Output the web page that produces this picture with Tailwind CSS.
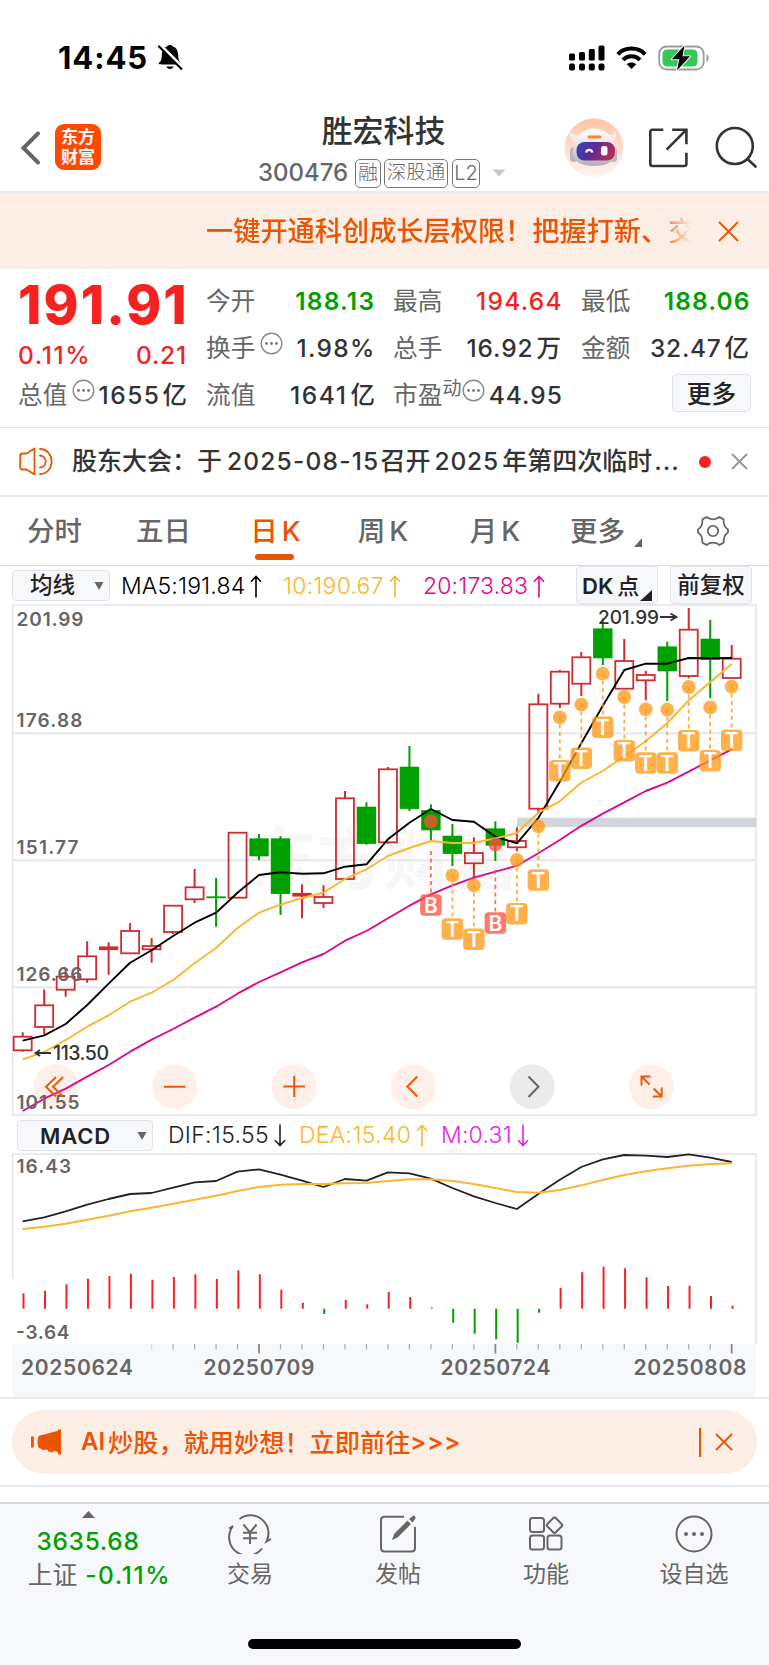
<!DOCTYPE html>
<html lang="zh-CN">
<head>
<meta charset="utf-8">
<title>胜宏科技 300476</title>
<script src="https://cdn.jsdelivr.net/npm/@tailwindcss/browser@4"></script>
</head>
<body class="w-[769px] h-[1665px] overflow-hidden bg-white text-[#333] font-[Inter,'Noto_Sans_CJK_SC',sans-serif] leading-none whitespace-nowrap">

<!-- status bar -->
<div class="h-[116px] flex items-center justify-between pl-[58px] pr-[59px]">
  <div class="flex items-center">
    <span class="text-[31px] font-bold text-black tracking-[0.900px] mt-[-1px]">14:45</span>
    <svg class="ml-[9px]" width="27" height="28" viewBox="0 0 27 28"><path d="M4.500 20.500 H23 C24 20.500 24.200 19.500 23.400 18.600 C21.600 16.800 21.300 15 21.200 11 C21 6.500 19 3.500 16 2.600 C15 0.600 11 0.600 10 2.600 C7 3.500 5 6.500 4.800 11 C4.700 15 4.400 16.800 2.200 18.600 C1.200 19.500 1.500 20.500 4.500 20.500Z M9.500 22.500 H16.500 C16 25.700 10 25.700 9.500 22.500Z" fill="#000"/><path d="M2.500 0.500 L27 25" stroke="#fff" stroke-width="3.600"/><path d="M1.300 1.800 L25 25.500" stroke="#000" stroke-width="2"/></svg>
  </div>
  <div class="flex items-center mt-[-1px]">
    <svg width="36" height="26" viewBox="0 0 36 26"><g fill="#000"><rect x="0" y="8.500" width="6" height="7" rx="1.500"/><rect x="10" y="7" width="6" height="8.500" rx="1.500"/><rect x="19.800" y="4" width="6" height="11.500" rx="1.500"/><rect x="29.500" y="0.500" width="6" height="15" rx="1.500"/><rect x="0" y="18.500" width="6" height="7" rx="2"/><rect x="10" y="18.500" width="6" height="7" rx="2"/><rect x="19.800" y="18.500" width="6" height="7" rx="2"/><rect x="29.500" y="18.500" width="6" height="7" rx="2"/></g></svg>
    <svg class="ml-[11px]" width="31" height="24" viewBox="0 0 31 24"><g fill="none" stroke="#000" stroke-width="4"><path d="M1.800 8.300 C9 0.700 22 0.700 29.200 8.300"/><path d="M7 13.800 C11.500 9 19.500 9 24 13.800"/></g><path d="M15.500 23 L10.800 18.300 C13.200 15.900 17.800 15.900 20.200 18.300Z" fill="#000"/></svg>
    <svg class="ml-[11px]" width="52" height="26" viewBox="0 0 52 26"><rect x="1.200" y="1.500" width="44.500" height="23" rx="7.500" fill="none" stroke="#9b9b9b" stroke-width="1.800"/><rect x="4.500" y="4.500" width="35" height="17" rx="4.500" fill="#34c759"/><path d="M48.500 9 C51.500 10.500 51.500 15.500 48.500 17Z" fill="#9b9b9b"/><path d="M26.500 0.500 L13.800 14.300 H21.300 L19 25.500 L32 11.300 H24.500Z" fill="#000" stroke="#fff" stroke-width="1.800" paint-order="stroke" stroke-linejoin="round"/></svg>
  </div>
</div>

<!-- title bar -->
<div class="h-[77px] flex border-b-2 border-[#ebebee]">
  <svg class="ml-[20px] mt-[14px] shrink-0" width="22" height="36" viewBox="0 0 22 36"><path d="M18 3.500 L3.500 18 L18 32.500" fill="none" stroke="#666" stroke-width="4" stroke-linecap="round"/></svg>
  <div class="ml-[13px] mt-[8px] size-[46px] rounded-[9px] bg-[#ff4800] text-white font-bold text-[17px] leading-[20px] pt-[3px] text-center shrink-0"><div>东方</div><div>财富</div></div>
  <div class="w-[280px] ml-[142px] flex flex-col items-center shrink-0">
    <div class="text-[30.900px] leading-[32px] font-medium ml-[1px] mt-[-1px]">胜宏科技</div>
    <div class="flex items-center mt-[11px] h-[30px] self-stretch pl-[15px] text-[#666]">
      <span class="text-[24px] font-medium w-[97px]">300476</span>
      <span class="h-[29px] w-[26px] border border-[#777] rounded-[5px] text-[20px] font-light flex items-center justify-center">融</span>
      <span class="ml-[3px] h-[29px] w-[64px] border border-[#777] rounded-[5px] text-[19.500px] font-light flex items-center justify-center">深股通</span>
      <span class="ml-[4px] h-[29px] w-[28px] border border-[#777] rounded-[5px] text-[20px] font-light flex items-center justify-center">L2</span>
      <svg class="ml-[12px]" width="14" height="8" viewBox="0 0 14 8"><path d="M0.500 0.500 H13.500 L7 7.500Z" fill="#c9c9c9"/></svg>
    </div>
  </div>
  <svg class="ml-[41px] mt-[2px] shrink-0" width="60" height="60" viewBox="0 0 60 60">
    <defs><linearGradient id="halo" x1="0" y1="0" x2="0" y2="1"><stop offset="0" stop-color="#ffc4a6"/><stop offset="1" stop-color="#fff5f0"/></linearGradient><linearGradient id="visor" x1="0" y1="0" x2="1" y2="0.300"><stop offset="0" stop-color="#3348b8"/><stop offset="0.500" stop-color="#5a2a9c"/><stop offset="1" stop-color="#b52a5c"/></linearGradient><linearGradient id="helmet" x1="0" y1="0" x2="0" y2="1"><stop offset="0" stop-color="#fff"/><stop offset="0.450" stop-color="#e6e2e6"/><stop offset="1" stop-color="#b3b0ba"/></linearGradient></defs>
    <circle cx="30" cy="29.700" r="29.300" fill="url(#halo)"/>
    <path d="M11 24 C5 21 5 15 6.500 13 C8 17 11 18 15 17Z M47 24 C53 21 53 15 51.500 13 C50 17 47 18 43 17Z" fill="#f4ecec"/>
    <rect x="6" y="29" width="8" height="15" rx="4" fill="#b9b5bc"/><rect x="46" y="29" width="7" height="15" rx="3.500" fill="#b9b5bc"/>
    <path d="M30 10.500 C41 10.500 50 18 51.500 33 C51.500 44 42 48 30 48 C18 48 8.500 44 9 33 C10 18 19 10.500 30 10.500Z" fill="url(#helmet)"/>
    <rect x="23.500" y="17.500" width="14" height="3" rx="1.500" fill="#f08a35"/>
    <rect x="12.500" y="24" width="38.500" height="18.500" rx="8" fill="url(#visor)"/>
    <path d="M22 34.500 C23 31 27.500 31 28.500 34.500" fill="none" stroke="#fff" stroke-width="2.200"/><rect x="37" y="28" width="6.500" height="9.500" rx="2.500" fill="#fff"/>
  </svg>
  <svg class="ml-[24px] mt-[11px] shrink-0" width="42" height="42" viewBox="0 0 42 42"><g fill="none" stroke="#333" stroke-width="2.600" stroke-linecap="square"><path d="M14 2.800 H4.500 Q2.300 2.800 2.300 5 V36.800 Q2.300 39 4.500 39 H36.200 Q38.400 39 38.400 36.800 V27"/><path d="M25.500 2.800 H38.400 V16 M37.500 3.700 L19.500 21.700"/></g></svg>
  <svg class="ml-[25px] mt-[10px] shrink-0" width="44" height="44" viewBox="0 0 44 44"><g fill="none" stroke="#333" stroke-width="2.600" stroke-linecap="round"><circle cx="19.800" cy="20" r="18"/><path d="M32.500 33 L40.500 40.500"/></g></svg>
</div>

<!-- promo banner -->
<div class="h-[76px] bg-[#fdeee5] flex items-center text-[#ea5504]">
  <div class="ml-[206px] w-[486px] text-[27.200px] leading-[40px] font-medium font-['Noto_Sans_CJK_SC',sans-serif] mt-[-5px] [mask-image:linear-gradient(to_right,black_450px,transparent_485px)]">一键开通科创成长层权限！把握打新、交</div>
  <svg class="ml-[26px]" width="21" height="21" viewBox="0 0 21 21"><path d="M1 1 L20 20 M20 1 L1 20" stroke="#ea5504" stroke-width="1.800"/></svg>
</div>

<!-- quote -->
<div class="h-[159px] border-b-[1.500px] border-[#e4e4e6] flex pl-[18px] text-[24.700px] text-[#666]">
  <div class="w-[169px] flex flex-col">
    <div class="h-[61px] pt-[10px] text-[53px] font-extrabold text-[#f62222] tracking-[2.100px] leading-[53px]">191.91</div>
    <div class="h-[46px] pt-[4px] flex items-center justify-between text-[24.500px] font-medium text-[#f62222]"><span class="tracking-[1.600px]">0.11%</span><span class="tracking-[0.800px]">0.21</span></div>
    <div class="h-[34px] mt-[2px] flex items-center justify-between">
      <span class="flex items-center">总值<svg class="ml-[5px] mt-[-9px]" width="23" height="23" viewBox="0 0 23 23"><circle cx="11.500" cy="11.500" r="10.300" fill="none" stroke="#8a8a8a" stroke-width="1.400"/><g fill="#777"><circle cx="6.500" cy="11.500" r="1.400"/><circle cx="11.500" cy="11.500" r="1.400"/><circle cx="16.500" cy="11.500" r="1.400"/></g></svg></span>
      <span class="text-[#333] font-medium text-[24.500px] tracking-[1.500px]">1655<span class="ml-[2px] tracking-normal">亿</span></span>
    </div>
  </div>
  <div class="ml-[19px] w-[168px] flex flex-col pt-[9px]">
    <div class="h-[47px] flex items-center justify-between">今开<span class="text-[#00a000] font-semibold text-[24.500px] tracking-[1.200px] mr-[-1.200px]">188.13</span></div>
    <div class="h-[47px] flex items-center justify-between"><span class="flex items-center">换手<svg class="ml-[5px] mt-[-9px]" width="23" height="23" viewBox="0 0 23 23"><circle cx="11.500" cy="11.500" r="10.300" fill="none" stroke="#8a8a8a" stroke-width="1.400"/><g fill="#777"><circle cx="6.500" cy="11.500" r="1.400"/><circle cx="11.500" cy="11.500" r="1.400"/><circle cx="16.500" cy="11.500" r="1.400"/></g></svg></span><span class="text-[#333] font-medium text-[24.500px] tracking-[1.300px] mr-[-1.600px]">1.98%</span></div>
    <div class="h-[47px] flex items-center justify-between">流值<span class="text-[#333] font-medium text-[24.500px] tracking-[1.600px] mr-[-1px]">1641<span class="ml-[3px] tracking-normal">亿</span></span></div>
  </div>
  <div class="ml-[19px] w-[168px] flex flex-col pt-[9px]">
    <div class="h-[47px] flex items-center justify-between">最高<span class="text-[#f62222] font-medium text-[24.500px] tracking-[1.300px] mr-[-1.900px]">194.64</span></div>
    <div class="h-[47px] flex items-center justify-between">总手<span class="text-[#333] font-medium text-[24.500px] tracking-[0.900px]">16.92<span class="ml-[3px] tracking-normal">万</span></span></div>
    <div class="h-[47px] flex items-center justify-between"><span class="flex items-center">市盈<span class="text-[19px] mt-[-14px]">动</span><svg class="ml-[1px] mt-[-9px]" width="23" height="23" viewBox="0 0 23 23"><circle cx="11.500" cy="11.500" r="10.300" fill="none" stroke="#8a8a8a" stroke-width="1.400"/><g fill="#777"><circle cx="6.500" cy="11.500" r="1.400"/><circle cx="11.500" cy="11.500" r="1.400"/><circle cx="16.500" cy="11.500" r="1.400"/></g></svg></span><span class="text-[#333] font-medium text-[24.500px] tracking-[1px] mr-[-1.900px]">44.95</span></div>
  </div>
  <div class="ml-[20px] w-[168px] flex flex-col pt-[9px]">
    <div class="h-[47px] flex items-center justify-between">最低<span class="text-[#00a000] font-semibold text-[24.500px] tracking-[1.100px] mr-[-1.600px]">188.06</span></div>
    <div class="h-[47px] flex items-center justify-between">金额<span class="text-[#333] font-medium text-[24.500px] tracking-[0.700px]">32.47<span class="ml-[3px] tracking-normal">亿</span></span></div>
    <div class="h-[38px] w-[79px] mt-[2px] self-end mr-[-2px] rounded-[4px] border-[1.500px] border-[#e1e3e9] bg-[#f7f8fb] flex items-center justify-center text-[#222] font-medium pt-[2px]">更多</div>
  </div>
</div>

<!-- notice -->
<div class="h-[69px] border-b-2 border-[#ebebee] flex items-center">
  <svg class="ml-[19px]" width="34" height="29" viewBox="0 0 34 29"><g fill="none" stroke="#ea5504" stroke-width="1.800" stroke-linecap="round" stroke-linejoin="round"><path d="M15.500 1.500 L7.500 6.500 H3.500 Q1.200 6.500 1.200 9 V20 Q1.200 22.500 3.500 22.500 H7.500 L15.500 27.500Z"/><path d="M21 8.500 C28.500 9 28.500 20 21 20.500 M21 2 C36.500 2.500 36.500 26.500 21 27"/></g></svg>
  <div class="ml-[19px] w-[606px] flex items-center font-medium text-[25px]"><span>股东大会：于</span><span class="ml-[5px] text-[24.500px] tracking-[1.200px]">2025-08-15</span><span class="ml-[1px]">召开</span><span class="ml-[4px] text-[24.500px] tracking-[0.900px]">2025</span><span class="ml-[3px]">年第四次临时</span><span class="ml-[2px] tracking-[1px]">...</span></div>
  <span class="ml-[21px] size-[12px] rounded-full bg-[#f62222]"></span>
  <svg class="ml-[20px]" width="17" height="17" viewBox="0 0 17 17"><path d="M1 1 L16 16 M16 1 L1 16" stroke="#999" stroke-width="2"/></svg>
</div>

<!-- period tabs -->
<div class="h-[69px] border-b-[1.500px] border-[#d9dbe2] flex text-[27.500px] text-[#666] font-medium">
  <div class="w-[109px] h-[69px] flex items-center justify-center">分时</div>
  <div class="w-[109px] h-[69px] flex items-center justify-center">五日</div>
  <div class="w-[115px] h-[69px] flex items-center justify-center relative text-[#ea5504]">日<span class="ml-[4px]">K</span><i class="absolute left-[37px] top-[57px] w-[39px] h-[6px] rounded-full bg-[#ea5504]"></i></div>
  <div class="w-[100px] h-[69px] flex items-center justify-center">周<span class="ml-[4px]">K</span></div>
  <div class="w-[124px] h-[69px] flex items-center justify-center">月<span class="ml-[4px]">K</span></div>
  <div class="ml-[13px] h-[69px] flex items-center">更多<svg class="ml-[9px] mt-[21px]" width="8" height="9" viewBox="0 0 8 9"><path d="M8 0 V9 H0Z" fill="#666"/></svg></div>
  <svg class="ml-[55px] mt-[18px]" width="32" height="32" viewBox="0 0 32 32"><g fill="none" stroke="#666" stroke-width="1.800" stroke-linejoin="round"><path d="M9.500 2 Q12.500 4.300 16 4.300 Q19.500 4.300 22.500 2 L26.600 4.400 Q26.300 11.800 31 14.600 V17.400 Q26.300 20.200 26.600 27.600 L22.500 30 Q19.500 27.700 16 27.700 Q12.500 27.700 9.500 30 L5.400 27.600 Q5.700 20.200 1 17.400 V14.600 Q5.700 11.800 5.400 4.400Z"/><circle cx="16" cy="16" r="5.200"/></g></svg>
</div>

<!-- moving averages -->
<div class="h-[37px] flex items-center text-[23px] font-light pl-[12px]">
  <div class="w-[98px] h-[31px] rounded-[4px] border-[1.500px] border-[#e1e3e9] bg-[#f7f8fb] flex items-center pl-[17px] mt-[2px] font-medium text-[22.500px] text-[#222]">均线<svg class="ml-[19px]" width="10" height="8" viewBox="0 0 10 8"><path d="M0.500 0 H9.500 L5 8Z" fill="#666"/></svg></div>
  <div class="ml-[11px] w-[161px] flex items-center text-black mt-[3px]"><span class="tracking-[0.150px]">MA5:191.84</span><svg class="ml-[5px]" width="12" height="23" viewBox="0 0 12 23"><path d="M6 22.500 V1.500 M1 6.800 L6 1.500 L11 6.800" fill="none" stroke="currentColor" stroke-width="1.600"/></svg></div>
  <div class="ml-[1px] w-[140px] flex items-center text-[#fdb52f] mt-[3px]"><span class="tracking-[0.200px]">10:190.67</span><svg class="ml-[5px]" width="12" height="23" viewBox="0 0 12 23"><path d="M6 22.500 V1.500 M1 6.800 L6 1.500 L11 6.800" fill="none" stroke="currentColor" stroke-width="1.600"/></svg></div>
  <div class="w-[153px] flex items-center text-[#e2068c] mt-[3px]"><span class="tracking-[0.150px]">20:173.83</span><svg class="ml-[5px]" width="12" height="23" viewBox="0 0 12 23"><path d="M6 22.500 V1.500 M1 6.800 L6 1.500 L11 6.800" fill="none" stroke="currentColor" stroke-width="1.600"/></svg></div>
  <div class="w-[82px] h-[38px] mt-[1px] rounded-[4px] border-[1.500px] border-[#e1e3e9] bg-[#f7f8fb] flex items-center pl-[5px] pt-[2px] font-medium text-[22px] text-[#222]"><span class="font-semibold">DK</span><span class="ml-[4px]">点</span><svg class="ml-[1px] mt-[18px]" width="12" height="11" viewBox="0 0 12 11"><path d="M12 0 V11 H0Z" fill="#222"/></svg></div>
  <div class="ml-[12px] w-[82px] h-[38px] mt-[1px] rounded-[4px] border-[1.500px] border-[#e1e3e9] bg-[#f7f8fb] flex items-center justify-center pt-[1px] font-medium text-[22.500px] text-[#222]">前复权</div>
</div>

<!-- candlestick chart, then MACD header and chart; x/y units are page pixels -->
<svg id="kline" class="block" width="769" height="513" viewBox="0 603 769 513"></svg>
<div class="h-[37px] flex items-center pl-[17px] text-[23px] font-light">
  <div class="w-[136px] h-[31px] mt-[2px] rounded-[4px] border-[1.500px] border-[#e1e3e9] bg-[#f7f8fb] flex items-center pl-[22px] font-semibold text-[22px] tracking-[0.900px] text-[#222]">MACD<svg class="ml-[26px]" width="10" height="8" viewBox="0 0 10 8"><path d="M0.500 0 H9.500 L5 8Z" fill="#666"/></svg></div>
  <div class="ml-[15px] mt-[2px] w-[131px] flex items-center text-[#222] tracking-[0.300px]">DIF:15.55<svg class="ml-[5px]" width="12" height="23" viewBox="0 0 12 23"><path d="M6 0.500 V21.500 M1 16.200 L6 21.500 L11 16.200" fill="none" stroke="currentColor" stroke-width="1.600"/></svg></div>
  <div class="w-[142px] mt-[2px] flex items-center text-[#fdb52f] tracking-[0.300px]">DEA:15.40<svg class="ml-[5px]" width="12" height="23" viewBox="0 0 12 23"><path d="M6 22.500 V1.500 M1 6.800 L6 1.500 L11 6.800" fill="none" stroke="currentColor" stroke-width="1.600"/></svg></div>
  <div class="flex items-center mt-[2px] text-[#e61ff0] tracking-[0.200px]">M:0.31<svg class="ml-[5px]" width="12" height="23" viewBox="0 0 12 23"><path d="M6 0.500 V21.500 M1 16.200 L6 21.500 L11 16.200" fill="none" stroke="currentColor" stroke-width="1.600"/></svg></div>
</div>
<svg id="macd" class="block" width="769" height="244" viewBox="0 1153 769 244"></svg>

<!-- AI promo -->
<div class="h-[90px] border-y-2 border-[#ebebee] flex items-center pl-[12px]">
  <div class="w-[745px] h-[64px] rounded-full bg-[#fdeee5] flex items-center text-[#ea5504]">
    <svg class="ml-[19px] mt-[-1px]" width="31" height="26" viewBox="0 0 31 26"><g fill="#ea5504"><rect x="0" y="7.500" width="2.800" height="11"/><path d="M7.500 7 L27 1.800 V0.500 H30 V25.500 H27 V23 L23 22 L21 23.500 L17.500 22.500 L16 20.500 L12 21 L7.500 18.500 Q5.500 13 7.500 7Z"/></g></svg>
    <div class="ml-[19px] w-[600px] flex items-center font-medium text-[25.200px]"><span class="text-[24px] font-semibold">AI</span><span class="ml-[3px] font-['Noto_Sans_CJK_SC',sans-serif]">炒股，就用妙想！立即前往</span><span class="text-[24px] tracking-[0.800px] font-semibold">&gt;&gt;&gt;</span></div>
    <i class="ml-[18px] w-[1.500px] h-[29px] bg-[#ea5504]"></i>
    <svg class="ml-[14px]" width="18" height="18" viewBox="0 0 18 18"><path d="M1 1 L17 17 M17 1 L1 17" stroke="#ea5504" stroke-width="1.800"/></svg>
  </div>
</div>

<!-- bottom bar -->
<div class="mt-[15px] h-[163px] border-t-2 border-[#d9dadd] bg-[#f7f8fb] flex text-[23px] text-[#666] relative">
  <div class="w-[176px] flex flex-col items-center">
    <svg class="mt-[7px]" width="13" height="7" viewBox="0 0 13 7"><path d="M0 7 H13 L6.500 0Z" fill="#666"/></svg>
    <span class="mt-[9px] text-[24.500px] leading-[28px] font-medium text-[#00a000] tracking-[0.700px]">3635.68</span>
    <span class="mt-[2px] flex items-center text-[24.700px] leading-[36px] ml-[23px]">上证<span class="ml-[8px] text-[24.500px] font-medium text-[#00a000] tracking-[1.600px]">-0.11%</span></span>
  </div>
  <div class="w-[148px] flex flex-col items-center">
    <svg class="mt-[10px]" width="44" height="40" viewBox="0 0 44 40"><g fill="none" stroke="#666" stroke-width="2"><path d="M11.500 5 A18 18 0 0 1 38.500 27.500 L43 25"/><path d="M34 34.500 A18 18 0 0 1 5 12 L1 14.500"/><path d="M15.500 10.500 L22 18.500 L28.500 10.500 M22 18.500 V30 M15 18.800 H29 M15 24.300 H29"/></g></svg>
    <span class="mt-[6px] leading-[28px]">交易</span>
  </div>
  <div class="w-[148px] flex flex-col items-center">
    <svg class="mt-[10px]" width="40" height="40" viewBox="0 0 40 40"><path d="M26 2.800 H6.500 Q3 2.800 3 6.300 V34 Q3 37.500 6.500 37.500 H33.500 Q37 37.500 37 34 V13" fill="none" stroke="#666" stroke-width="2"/><path d="M14 26 L16 20 L29.500 6.500 L33 10 L19.500 23.500Z M31 5 L35.500 1.500 Q38 2.500 37.500 4.500 L34.500 8.500Z" fill="#666"/></svg>
    <span class="mt-[6px] leading-[28px]">发帖</span>
  </div>
  <div class="w-[148px] flex flex-col items-center">
    <svg class="mt-[10px]" width="40" height="40" viewBox="0 0 40 40"><g fill="none" stroke="#666" stroke-width="2"><rect x="4" y="4" width="14" height="14" rx="2.500"/><rect x="4" y="21.500" width="14" height="14" rx="2.500"/><rect x="21.500" y="21.500" width="14" height="14" rx="2.500"/><path d="M27.500 3.800 Q28.500 2.800 29.500 3.800 L35.800 10.200 Q36.800 11.200 35.800 12.200 L29.500 18.500 Q28.500 19.500 27.500 18.500 L21.200 12.200 Q20.200 11.200 21.200 10.200Z"/></g></svg>
    <span class="mt-[6px] leading-[28px]">功能</span>
  </div>
  <div class="w-[148px] flex flex-col items-center">
    <svg class="mt-[10px]" width="40" height="40" viewBox="0 0 40 40"><circle cx="20" cy="20" r="17.500" fill="none" stroke="#666" stroke-width="2"/><g fill="#666"><circle cx="12" cy="20" r="2"/><circle cx="20" cy="20" r="2"/><circle cx="28" cy="20" r="2"/></g></svg>
    <span class="mt-[6px] leading-[28px]">设自选</span>
  </div>
  <i class="absolute left-[248px] top-[135px] w-[273px] h-[10px] rounded-full bg-black"></i>
</div>

<script>
const X = i => 22.7 + i * 21.485;
const RED = '#d02c30', GREEN = '#00a000';
// [bodyTop, bodyBottom, wickTop, wickBottom, up]
const K = [
 [1036.7,1050.3,1032.3,1051.7,1],[1005.3,1027,989.3,1034.3,1],[976.7,989.7,969,996.7,1],[956.3,979.3,941.3,982.7,1],
 [947,949.5,942.3,974.7,1],[931,953.3,923,953.3,1],[946,949.3,938,962.7,1],[905.7,932,905.7,934,1],[887.3,899.3,869,903,1],
 [897,897.6,878,926.7,0],[832.7,897.7,832.7,897.7,1],[839,855.7,834,860.3,0],[839,893.3,836.3,915,0],[893.5,896,884.3,918.3,1],
 [897,903,885.3,908,1],[798.3,879,791,879,1],[807.3,843.3,802.3,844.7,0],[769.3,842.3,767,843.7,1],[767.3,808.3,746,811,0],
 [810.7,829.7,804.3,841,0],[836.3,853.3,824,866,0],[853,863.3,837.3,877,1],[829,845,821.3,861,0],[841,847.3,827.3,851.3,1],
 [704.3,808.7,693.7,813,1],[671.7,703.7,670,708,1],[657.3,683.7,652,696,1],[629,657.7,618.3,665,0],[661,688.7,639,688.7,1],
 [675,680.3,670.7,700.3,1],[647,670.7,641.7,701,0],[629.7,676,608,678.3,1],[639.3,659.3,620,698.3,0],[658.7,678,645,678,1]];
const MA5=[1040.7,1035.3,1024,1005,983.7,962.7,950.3,936,922.7,912.7,892.7,875,872.3,873.7,873.3,866.7,864.3,839.3,822.7,809,820,821.7,836.7,843.3,818,781.7,743.3,705.7,670,663.7,663.7,658,658.3,658];
const MA10=[1059.3,1052,1040,1026.7,1015.3,1001.7,992.7,980,963.3,948,928,912.7,904.7,898,892.7,879,869.3,856,848,841,843,843,838.3,833,812.7,801.3,782.5,771,756.3,741.3,723,700.3,682,664];
const MA20=[1111,1098.7,1088.7,1076.7,1065,1051.7,1039.7,1029,1017.7,1006.7,993.7,982,972.3,962.3,954,940.7,931,918.3,905.7,894.3,885.3,877.7,871.7,865.7,853.3,840,825.8,813.7,802.3,791,782.7,771.7,760.3,749.3];
// [index, letter, dotY, dashTop, boxY]
const M = [[19,'B',821.3,851,905],[20,'T',875.3,875,929],[21,'T',885.3,885,939.3],[22,'B',844.3,870,923],[23,'T',860,860,913.7],
 [24,'T',826.3,826,880],[25,'T',717.3,717,770.7],[26,'T',704.7,704,758.3],[27,'T',673.7,673,727.3],[28,'T',697,697,750.7],
 [29,'T',709.3,709,763],[30,'T',709.7,709,763],[31,'T',687,687,740.7],[32,'T',707.3,707,760.7],[33,'T',686.7,686,740.3]];
const line = (a,c,w) => `<polyline fill="none" stroke="${c}" stroke-width="${w}" stroke-linejoin="round" points="${a.map((y,i)=>X(i).toFixed(1)+','+y).join(' ')}"/>`;
const F = `font-family="Inter" `;
const txt = (x,y,w,s,size,wt,c) => `<text ${F}x="${x}" y="${y}" font-size="${size}" font-weight="${wt}" fill="${c}" textLength="${w}">${s}</text>`;

let s = `<text x="249" y="884" font-family="Noto Sans CJK SC" font-weight="700" font-size="68" textLength="270" fill="#f7f7f7">东方财富</text>`;
s += `<g fill="none" stroke="#e4e7ee" stroke-width="1.500"><path d="M12.500 1115.200 V605 H756 V1115.200Z" stroke="#e4e5e8"/><path d="M12.500 733.300 H756 M12.500 860.200 H756 M12.500 987.200 H756" stroke-width="2"/></g>`;
s += `<rect x="517" y="817.700" width="239.500" height="9.500" fill="#d2d6dc"/>`;
[56.2,174.7,294,413.5,532.3,651.3].forEach((x,i)=>{ s += `<circle cx="${x}" cy="1086.700" r="22.500" fill="${i===4?'#ebebeb':'#fef0e9'}"/>`; });
K.forEach(([a,b,t,u,up],i) => {
  const x = X(i), c = up ? RED : GREEN;
  s += `<path d="M${x} ${t} V${Math.max(t,a)} M${x} ${b} V${u}" stroke="${c}" stroke-width="2"/>`;
  s += up && b-a > 2.6 ? `<rect x="${x-9}" y="${a}" width="18" height="${b-a}" fill="none" stroke="${c}" stroke-width="1.800"/>`
     : `<rect x="${x-9.7}" y="${a-.6}" width="19.400" height="${b-a+1.200}" fill="${c}"/>`;
});
s += line(MA5,'#000',1.900) + line(MA10,'#fdb52f',1.900) + line(MA20,'#e2068c',1.900);
M.forEach(([i,l,d,t,y]) => {
  const x = X(i), c = l==='B' ? '#ff4d3d' : '#ff9814';
  s += `<g opacity=".76"><circle cx="${x}" cy="${d}" r="6.900" fill="${c}"/><rect x="${x-10.700}" y="${y-10.700}" width="21.400" height="21.400" rx="4" fill="${c}"/></g>`;
  s += `<path d="M${x} ${t} V${y-11}" stroke="${c}" opacity=".8" stroke-width="1.800" stroke-dasharray="4 3.500"/>`;
  s += `<text ${F}x="${x}" y="${y+7.500}" font-size="21" font-weight="600" fill="#fff" text-anchor="middle">${l}</text>`;
});
s += txt(16.5,626,67,'201.99',19,600,'#666')+txt(16.5,727,66,'176.88',19,600,'#666')+txt(16.5,854,62,'151.77',19,600,'#666')+txt(16.5,981,66,'126.66',19,600,'#666')+txt(16.5,1108.500,63,'101.55',19,600,'#666');
s += txt(53,1060,56,'113.50',19.500,500,'#333')+`<path d="M51 1053 H36 M40 1050 L35.500 1053 L40 1056" fill="none" stroke="#333" stroke-width="1.800"/>`;
s += txt(598,624,61,'201.99',19,500,'#333')+`<path d="M660 617 H675 M670.500 613.500 L676.500 617 L670.500 620.500" fill="none" stroke="#333" stroke-width="1.800"/>`;
s += `<g fill="none" stroke="#f0560a" stroke-width="2"><path d="M56 1077 L46 1086.700 L56 1096.500 M63 1077 L53 1086.700 L63 1096.500"/><path d="M164 1086.700 H185.500 M283.300 1086.500 H305 M294.200 1076 V1097"/><path d="M417.300 1076.500 L407.300 1086.500 L417.300 1096.500"/><path d="M528.500 1076.500 L538.500 1086.700 L528.500 1097" stroke="#666"/><path d="M641.500 1085.500 V1076.500 H650.500 M641.500 1076.500 L649.500 1084.500 M661.700 1087.500 V1096.500 H652.700 M661.700 1096.500 L653.700 1088.500"/></g>`;
document.getElementById('kline').innerHTML = s;

const DIF=[1221.3,1217.3,1211.3,1204.7,1199,1194,1193,1187.7,1182.3,1181,1171.7,1169.3,1174.7,1180.7,1187,1179,1180.7,1172.3,1173.3,1178.7,1188,1196.3,1203,1209,1194,1179.7,1167,1159.3,1155,1155.7,1157,1154.3,1157.7,1162];
const DEA=[1229,1226.7,1223.7,1219.7,1215.7,1211.3,1207.7,1203.7,1199.7,1195.7,1191,1187,1184.7,1184,1184,1183.3,1183,1181,1179.3,1179.3,1181,1184,1188,1192,1192.7,1190,1185.3,1180,1175,1171.3,1168.3,1165.7,1164,1163.3];
const BAR=[1293.3,1290.7,1284.3,1278.7,1276,1273.7,1279.7,1277,1274.3,1279,1270.3,1274.3,1289.7,1302.7,1314,1300,1304.3,1292,1297,1307.5,1322.7,1333.7,1339.3,1342.7,1312.7,1287.7,1272.3,1266.7,1268.3,1277.3,1286,1285.7,1296,1305.7];
let m = `<rect x="12" y="1344" width="744" height="54" fill="#f7f8fb"/><path d="M12.500 1279 V1153.900 H756 V1344" fill="none" stroke="#e4e5e8" stroke-width="1.500"/>`;
BAR.forEach((y,i)=>{ m += `<path d="M${X(i)+.8} 1308.700 V${y}" stroke="${y<1308.700?'#f62222':GREEN}" stroke-width="2"/>`; });
for (let i=6;i<34;i++){ const big = i%11===0; m += `<path d="M${X(i)} 1344 V${big?1353.500:1349.500}" stroke="${big?'#888':i===6?'#ddd':'#aaa'}" stroke-width="${big?1.800:1.200}"/>`; }
m += line(DIF,'#222',1.800) + line(DEA,'#fdb52f',1.900);
m += txt(16.5,1172.700,54.500,'16.43',19,600,'#666')+txt(16,1339,53.500,'-3.64',19,600,'#666');
m += txt(21,1374.500,112,'20250624',21,600,'#666')+txt(203.500,1374.500,111,'20250709',21,600,'#666')+txt(440.500,1374.500,110,'20250724',21,600,'#666')+txt(633.500,1374.500,113,'20250808',21,600,'#666');
document.getElementById('macd').innerHTML = m;
</script>
</body>
</html>
